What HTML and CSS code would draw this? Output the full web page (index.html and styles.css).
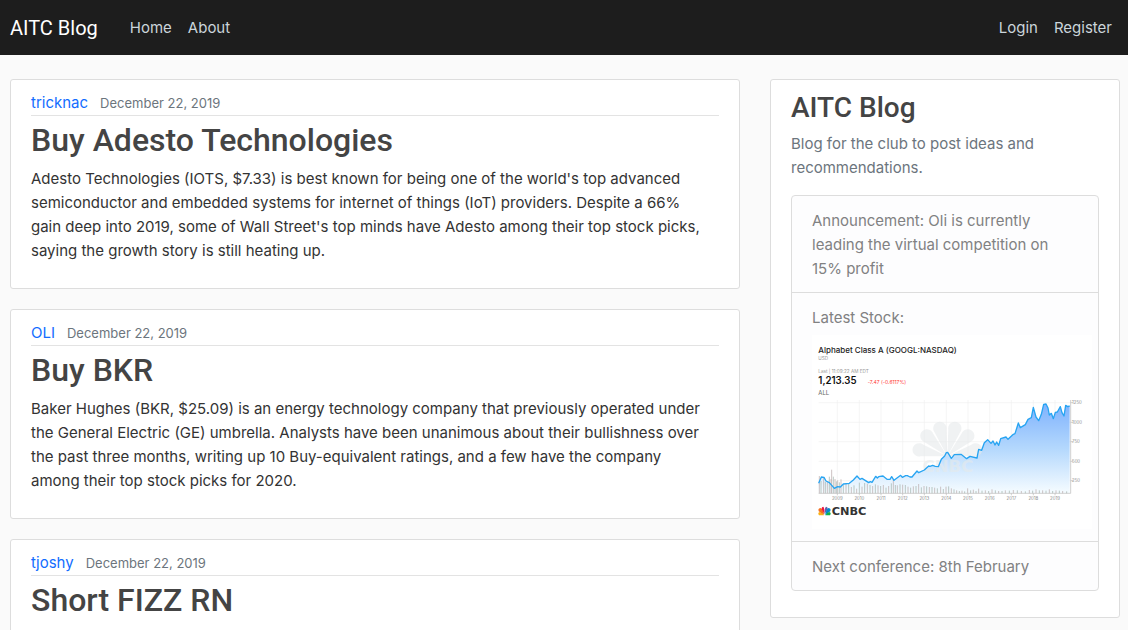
FILE: index.html
```
<!DOCTYPE html>
<html lang="en">
<head>
<meta charset="utf-8">
<meta name="viewport" content="width=device-width, initial-scale=1">
<title>AITC Blog</title>
<link rel="stylesheet" href="styles.css">
</head>
<body>
<header class="navbar">
  <a class="brand" href="#">AITC Blog</a>
  <nav class="nav nav-main" aria-label="Main">
    <a href="#">Home</a>
    <a href="#">About</a>
  </nav>
  <nav class="nav" aria-label="Account">
    <a href="#">Login</a>
    <a href="#">Register</a>
  </nav>
</header>
<div class="layout">
  <main class="posts">
    <article class="card post">
      <div class="meta"><a href="#">tricknac</a><small>December 22, 2019</small></div>
      <h2>Buy Adesto Technologies</h2>
      <p>Adesto Technologies (IOTS, $7.33) is best known for being one of the world's top advanced semiconductor and embedded systems for internet of things (IoT) providers. Despite a 66% gain deep into 2019, some of Wall Street's top minds have Adesto among their top stock picks, saying the growth story is still heating up.</p>
    </article>
    <article class="card post">
      <div class="meta"><a href="#">OLI</a><small>December 22, 2019</small></div>
      <h2>Buy BKR</h2>
      <p>Baker Hughes (BKR, $25.09) is an energy technology company that previously operated under the General Electric (GE) umbrella. Analysts have been unanimous about their bullishness over the past three months, writing up 10 Buy-equivalent ratings, and a few have the company among their top stock picks for 2020.</p>
    </article>
    <article class="card post">
      <div class="meta"><a href="#">tjoshy</a><small>December 22, 2019</small></div>
      <h2>Short FIZZ RN</h2>
    </article>
  </main>
  <aside class="card sidebar">
    <h3>AITC Blog</h3>
    <p class="lead">Blog for the club to post ideas and recommendations.</p>
    <ul class="list">
      <li>Announcement: Oli is currently leading the virtual competition on 15% profit</li>
      <li>Latest Stock:
        <svg class="chart" viewBox="0 0 840 582" role="img" aria-label="Alphabet Class A stock price">
          <defs>
            <linearGradient id="area" x1="0" y1="207" x2="0" y2="475" gradientUnits="userSpaceOnUse">
              <stop offset="0" stop-color="#7fb2fd"/>
              <stop offset=".5" stop-color="#b4d8fd"/>
              <stop offset="1" stop-color="#f6fcff"/>
            </linearGradient>
            <path id="petal" d="M0 0L-18-78A20 20 0 1 1 18-78Z"/>
          </defs>
          <rect width="840" height="582" fill="#fff"/>
          <path class="grid" d="M20 203H775M20 262H775M20 320H775M20 379H775M20 437H775M76 195V475M142 195V475M207 195V475M272 195V475M337 195V475M403 195V475M468 195V475M533 195V475M598 195V475M664 195V475M729 195V475"/>
          <path class="area" d="M20 445L28 426L36 427L42 438L52 443L67 460L77 455L85 456L94 447L112 445L124 435L135 423L144 433L150 430L170 443L175 440L180 442L191 424L196 429L200 425L213 423L225 433L234 433L239 425L246 436L266 421L271 427L281 422L286 422L294 426L300 426L315 408L320 413L337 405L350 393L354 394L362 391L370 394L379 395L388 373L398 363L403 353L407 352L418 370L427 359L447 358L464 371L474 364L495 369L500 343L509 346L517 323L527 314L537 325L543 318L549 330L554 321L560 331L566 311L582 306L588 313L604 298L609 296L619 264L625 278L640 269L648 253L658 248L664 217L672 246L680 257L688 238L695 208L702 207L708 219L712 240L718 235L724 251L730 232L736 231L745 215L750 233L756 243L761 211L767 215L773 213V475H20Z"/>
          <g class="watermark">
            <g transform="translate(406 364)">
              <use href="#petal" transform="rotate(-77)"/>
              <use href="#petal" transform="rotate(-45)"/>
              <use href="#petal" transform="rotate(-15)"/>
              <use href="#petal" transform="rotate(15)"/>
              <use href="#petal" transform="rotate(45)"/>
              <use href="#petal" transform="rotate(77)"/>
            </g>
            <text x="408" y="412">CNBC</text>
          </g>
          <path class="bars-a" d="M22 475V423M35 475V428M46 475V440M57 475V432M59 475V404M69 475V432M77 475V436M87 475V433M102 475V446M118 475V456M134 475V461M150 475V455M166 475V446M182 475V453M198 475V451M214 475V450M230 475V453M244 475V433M256 475V451M272 475V449M288 475V455M304 475V454M320 475V447M336 475V453M352 475V456M368 475V458M386 475V455M402 475V455M418 475V460M434 475V466M450 475V467M467 475V460M484 475V464M500 475V461M520 475V466M540 475V463M560 475V468M580 475V466M604 475V465M628 475V468M652 475V465M672 475V463M692 475V466M712 475V463M732 475V466M752 475V468"/>
          <path class="bars-b" d="M27 475V438M40 475V441M52 475V425M64 475V425M73 475V439M82 475V442M94 475V449M110 475V447M126 475V451M142 475V443M158 475V444M174 475V450M190 475V448M206 475V453M222 475V458M238 475V445M250 475V450M264 475V448M280 475V450M296 475V458M312 475V453M328 475V457M344 475V454M360 475V456M376 475V460M394 475V462M410 475V454M426 475V463M442 475V468M458 475V469M476 475V466M492 475V468M510 475V467M530 475V468M550 475V466M570 475V468M592 475V467M616 475V466M640 475V469M662 475V467M682 475V466M702 475V467M722 475V468M742 475V467M764 475V469"/>
          <path class="line" d="M20 445L28 426L36 427L42 438L52 443L67 460L77 455L85 456L94 447L112 445L124 435L135 423L144 433L150 430L170 443L175 440L180 442L191 424L196 429L200 425L213 423L225 433L234 433L239 425L246 436L266 421L271 427L281 422L286 422L294 426L300 426L315 408L320 413L337 405L350 393L354 394L362 391L370 394L379 395L388 373L398 363L403 353L407 352L418 370L427 359L447 358L464 371L474 364L495 369L500 343L509 346L517 323L527 314L537 325L543 318L549 330L554 321L560 331L566 311L582 306L588 313L604 298L609 296L619 264L625 278L640 269L648 253L658 248L664 217L672 246L680 257L688 238L695 208L702 207L708 219L712 240L718 235L724 251L730 232L736 231L745 215L750 233L756 243L761 211L767 215L773 213"/>
          <path class="axis" d="M20 475H776V195M776 203h7M776 262h7M776 320h7M776 379h7M776 437h7M76 475v6M142 475v6M207 475v6M272 475v6M337 475v6M403 475v6M468 475v6M533 475v6M598 475v6M664 475v6M729 475v6"/>
          <g class="ticks">
            <text x="780" y="208">1250</text><text x="780" y="267">1000</text><text x="780" y="325">750</text><text x="780" y="384">500</text><text x="780" y="442">250</text>
          </g>
          <g class="ticks years">
            <text x="76" y="494">2009</text><text x="142" y="494">2010</text><text x="207" y="494">2011</text><text x="272" y="494">2012</text><text x="337" y="494">2013</text><text x="403" y="494">2014</text><text x="468" y="494">2015</text><text x="533" y="494">2016</text><text x="598" y="494">2017</text><text x="664" y="494">2018</text><text x="729" y="494">2019</text>
          </g>
          <text class="name" x="19" y="54">Alphabet Class A (GOOGL:NASDAQ)</text>
          <text class="note" x="19" y="74">USD</text>
          <text class="note" x="19" y="114">Last | 11:09:22 AM EDT</text>
          <text class="price" x="19" y="147">1,213.35</text>
          <text class="change" x="167" y="147">-7.47 (-0.6117%)</text>
          <text class="range" x="19" y="180">ALL</text>
          <g>
            <path fill="#fbb116" d="M36 541L21 541Q16 534 23 531Q29 531 36 541Z"/>
            <path fill="#f36f21" d="M37 540L20 529Q17 519 26 519Q33 522 37 540Z"/>
            <path fill="#ef1541" d="M37 536L29 523Q28 515 34 515Q38 519 37 536Z"/>
            <path fill="#645faa" d="M38 536Q37 519 42 515Q48 515 47 523Z"/>
            <path fill="#0089cf" d="M39 540Q43 522 49 519Q58 519 55 529Z"/>
            <path fill="#0db14b" d="M40 541Q46 531 52 531Q59 534 54 541Z"/>
            <text class="logo" x="59" y="540">CNBC</text>
          </g>
        </svg>
      </li>
      <li>Next conference: 8th February</li>
    </ul>
  </aside>
</div>
</body>
</html>
```
FILE: styles.css
```
* { box-sizing: border-box; }
body {
  margin: 0;
  background: #fafafa;
  color: #333;
  font: 15px/24px Inter, "Liberation Sans", sans-serif;
}
a { color: #126dff; text-decoration: none; }
h2, h3, p, ul { margin: 0; }
h2, h3, .brand { font-family: Roboto, "Liberation Sans", sans-serif; }
.navbar {
  display: flex;
  align-items: center;
  min-height: 55px;
  padding: 0 8px 0 10px;
  background: #1d1d1d;
}
.brand { margin-right: 24px; color: #fff; font-size: 20px; }
.nav { display: flex; }
.nav a { padding: 8px; color: #cbd5db; }
.nav-main { flex: 1; }
.layout {
  display: grid;
  grid-template-columns: minmax(0, 73fr) minmax(0, 35fr);
  gap: 30px;
  align-items: start;
  padding: 24px 8px 0 10px;
}
.posts { display: grid; gap: 20px; }
.card {
  background: #fff;
  border: 1px solid #ddd;
  border-radius: 3px;
  padding: 11px 20px 25px;
}
.meta {
  display: flex;
  align-items: baseline;
  gap: 12px;
  height: 25px;
  border-bottom: 1px solid #e3e3e3;
}
.meta small { color: #6c757d; font-size: 13px; }
.post h2 {
  margin: 4px 0 7px;
  color: #444;
  font-size: 32px;
  font-weight: 500;
  line-height: 40px;
}
.post p { padding-right: 12px; }
.sidebar { padding-bottom: 26px; }
.sidebar h3 {
  margin-bottom: 7px;
  color: #444;
  font-size: 28px;
  font-weight: 500;
  line-height: 34px;
}
.lead { margin-bottom: 15px; color: #6c757d; }
.list {
  padding: 0;
  list-style: none;
  color: #818182;
  background: #fdfdfe;
  border: 1px solid #ddd;
  border-radius: 4px;
}
.list li { padding: 13px 20px 11px; }
.list li + li { border-top: 1px solid #ddd; }
.list li:nth-child(2) { padding-bottom: 12px; }
.chart { display: block; width: 280px; height: auto; margin-top: 5px; }
.grid { fill: none; stroke: #f0f0f0; stroke-width: 2; }
.area { fill: url(#area); }
.line { fill: none; stroke: #27a4f2; stroke-width: 4; stroke-linejoin: round; }
.axis { fill: none; stroke: #b9b9b9; stroke-width: 2; }
.bars-a { stroke: #b9a9a9; stroke-width: 3; stroke-opacity: .7; }
.bars-b { stroke: #9fb0aa; stroke-width: 3; stroke-opacity: .7; }
.watermark { fill: #e6eaeb; fill-opacity: .6; }
.watermark text { font: bold 50px "DejaVu Sans", sans-serif; text-anchor: middle; }
.ticks { fill: #888; font-size: 13px; }
.years { text-anchor: middle; }
.name { fill: #222; font-size: 24px; font-weight: 500; }
.note { fill: #999; font-size: 14px; }
.price { fill: #111; font-size: 29px; font-weight: 600; }
.change { fill: #f33; font-size: 15px; }
.range { fill: #666; font-size: 18px; }
.logo { fill: #333; font: bold 34px "DejaVu Sans", sans-serif; }
```
